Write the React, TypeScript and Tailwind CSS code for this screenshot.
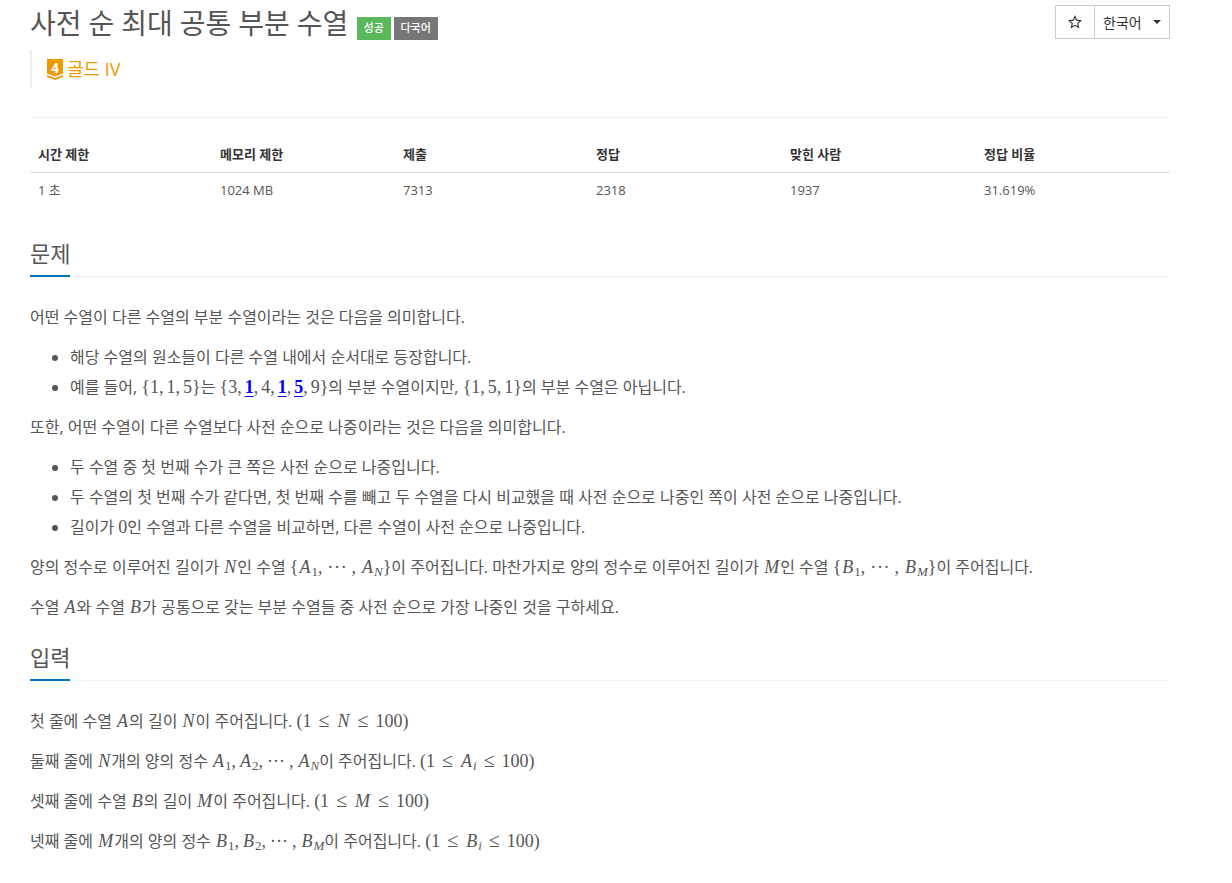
import type { ReactNode } from "react";

const I = ({ children }: { children: ReactNode }) => (
  <span className="font-['Liberation_Serif',serif] italic text-[18px] mx-[1px]">{children}</span>
);
const M = ({ children }: { children: ReactNode }) => (
  <span className="font-['Liberation_Serif',serif] text-[18px] [word-spacing:-1.5px]">{children}</span>
);
const Le = () => (
  <span className="font-['Liberation_Serif',serif] text-[20px] mx-[7px]">≤</span>
);
const Sub = ({ children }: { children: ReactNode }) => (
  <sub className="font-['Liberation_Serif',serif] text-[13px] relative -bottom-[3px] leading-none align-baseline">{children}</sub>
);
const Hit = ({ children }: { children: ReactNode }) => (
  <span className="text-[#0000ff] font-bold underline underline-offset-3">{children}</span>
);
const Dots = () => <span className="font-['Liberation_Serif',serif] text-[18px] [word-spacing:-0.5px]">{", ··· , "}</span>;
const WideDots = () => <span className="font-['Liberation_Serif',serif] text-[18px] [word-spacing:-1px] tracking-[0.7px]">{", ··· , "}</span>;

const stats = [
  ["시간 제한", "1 초", "w-[182px]"],
  ["메모리 제한", "1024 MB", "w-[183px]"],
  ["제출", "7313", "w-[193px]"],
  ["정답", "2318", "w-[194px]"],
  ["맞힌 사람", "1937", "w-[194px]"],
  ["정답 비율", "31.619%", "w-[194px]"],
];

const Heading = ({ title }: { title: string }) => (
  <div className="border-b border-dotted border-[#e5e5e5] h-[39px]">
    <h2 className="inline-block h-[39px] border-b-2 border-[#0076c0] text-[22px] leading-[30px] text-[#555]">{title}</h2>
  </div>
);

const Para = ({ children }: { children: ReactNode }) => (
  <p className="h-[24px] leading-[24px] mb-[16px] whitespace-nowrap">{children}</p>
);

const Li = ({ children }: { children: ReactNode }) => (
  <li className="h-[30px] leading-[30px] whitespace-nowrap">{children}</li>
);

export default function App() {
  return (
    <div className="w-[1232px] h-[883px] overflow-hidden bg-white px-[30px] pr-[62px] font-['Open_Sans','Noto_Sans_CJK_KR',sans-serif] text-[16px] text-[#555]">
      <div className="flex justify-between items-start pt-[5px] h-[50px]">
        <div className="flex items-center">
          <h1 className="text-[28px] leading-[36px] tracking-[-0.1px] text-[#555]">사전 순 최대 공통 부분 수열</h1>
          <span className="ml-[8.5px] mt-[10px] h-[23px] w-[34px] bg-[#5cb85c] text-white text-[11px] font-medium flex items-center justify-center">성공</span>
          <span className="ml-[3px] mt-[10px] h-[23px] w-[44px] bg-[#777] text-white text-[11px] font-medium flex items-center justify-center">다국어</span>
        </div>
        <div className="flex h-[34px] border border-[#ccc] text-[#333] text-[14px]">
          <div className="w-[39px] flex items-center justify-center border-r border-[#ccc]">
            <svg width="14" height="14" viewBox="0 0 24 24" fill="none" stroke="#333" strokeWidth="2">
              <path d="M12 2.500l2.900 6.300 6.900.8-5.100 4.700 1.400 6.800-6.100-3.400-6.100 3.400 1.400-6.800-5.100-4.700 6.900-.8z" />
            </svg>
          </div>
          <div className="w-[74px] flex items-center pl-[8px] gap-[11px]">
            <span>한국어</span>
            <span className="border-x-[4px] border-x-transparent border-t-[4px] border-t-[#333]" />
          </div>
        </div>
      </div>

      <div className="border-l-[2px] border-[#eee] h-[38px] flex items-center pl-[15px] gap-[4px] text-[#ec9a00] text-[18px]">
        <div className="relative w-[16px] h-[21px]">
          <svg width="16" height="21" viewBox="0 0 16 21">
            <path d="M0 0h16v14.500l-8 3-8-3z" fill="#ec9a00" />
            <path d="M0 16l8 3 8-3v2l-8 3-8-3z" fill="#ec9a00" />
          </svg>
          <span className="absolute inset-x-0 top-[1px] text-center text-[14px] leading-[15px] font-bold text-white">4</span>
        </div>
        <span>골드 IV</span>
      </div>

      <div className="mt-[29px] border-t border-[#eee] pt-[19px]">
        <div className="flex h-[36px] border-b border-[#ddd] font-bold text-[13px] text-[#333] items-center">
          {stats.map(([label, , w]) => (
            <div key={label} className={w + " pl-[8px]"}>{label}</div>
          ))}
        </div>
        <div className="flex h-[36px] text-[13px] items-center">
          {stats.map(([label, value, w]) => (
            <div key={label} className={w + " pl-[8px]"}>{value}</div>
          ))}
        </div>
      </div>

      <div className="mt-[29px]">
        <Heading title="문제" />
        <div className="pt-[28px]">
          <Para>어떤 수열이 다른 수열의 부분 수열이라는 것은 다음을 의미합니다.</Para>
          <ul className="list-disc pl-[40px] mb-[13px] -mt-[3px]">
            <Li>해당 수열의 원소들이 다른 수열 내에서 순서대로 등장합니다.</Li>
            <Li>
              예를 들어, <M>{"{1, 1, 5}"}</M>는 <M>{"{3, "}<Hit>1</Hit>{", 4, "}<Hit>1</Hit>{", "}<Hit>5</Hit>{", 9}"}</M>의 부분 수열이지만, <M>{"{1, 5, 1}"}</M>의 부분 수열은 아닙니다.
            </Li>
          </ul>
          <Para>또한, 어떤 수열이 다른 수열보다 사전 순으로 나중이라는 것은 다음을 의미합니다.</Para>
          <ul className="list-disc pl-[40px] mb-[13px] -mt-[3px]">
            <Li>두 수열 중 첫 번째 수가 큰 쪽은 사전 순으로 나중입니다.</Li>
            <Li>두 수열의 첫 번째 수가 같다면, 첫 번째 수를 빼고 두 수열을 다시 비교했을 때 사전 순으로 나중인 쪽이 사전 순으로 나중입니다.</Li>
            <Li>길이가 <M>0</M>인 수열과 다른 수열을 비교하면, 다른 수열이 사전 순으로 나중입니다.</Li>
          </ul>
          <Para>
            양의 정수로 이루어진 길이가 <I>N</I>인 수열 <M>{"{"}</M><I>A</I><Sub>1</Sub><WideDots /><I>A</I><Sub><i>N</i></Sub><M>{"}"}</M>이 주어집니다. 마찬가지로 양의 정수로 이루어진 길이가 <I>M</I>인 수열 <M>{"{"}</M><I>B</I><Sub>1</Sub><WideDots /><I>B</I><Sub><i>M</i></Sub><M>{"}"}</M>이 주어집니다.
          </Para>
          <Para>수열 <I>A</I>와 수열 <I>B</I>가 공통으로 갖는 부분 수열들 중 사전 순으로 가장 나중인 것을 구하세요.</Para>
        </div>
      </div>

      <div className="mt-[23px]">
        <Heading title="입력" />
        <div className="pt-[27px]">
          <Para>첫 줄에 수열 <I>A</I>의 길이 <I>N</I>이 주어집니다. <M>(1</M><Le /><I>N</I><Le /><M>100)</M></Para>
          <Para>둘째 줄에 <I>N</I>개의 양의 정수 <I>A</I><Sub>1</Sub><M>, </M><I>A</I><Sub>2</Sub><Dots /><I>A</I><Sub><i>N</i></Sub>이 주어집니다. <M>(1</M><Le /><I>A</I><Sub><i>i</i></Sub><Le /><M>100)</M></Para>
          <Para>셋째 줄에 수열 <I>B</I>의 길이 <I>M</I>이 주어집니다. <M>(1</M><Le /><I>M</I><Le /><M>100)</M></Para>
          <Para>넷째 줄에 <I>M</I>개의 양의 정수 <I>B</I><Sub>1</Sub><M>, </M><I>B</I><Sub>2</Sub><Dots /><I>B</I><Sub><i>M</i></Sub>이 주어집니다. <M>(1</M><Le /><I>B</I><Sub><i>i</i></Sub><Le /><M>100)</M></Para>
        </div>
      </div>
    </div>
  );
}
